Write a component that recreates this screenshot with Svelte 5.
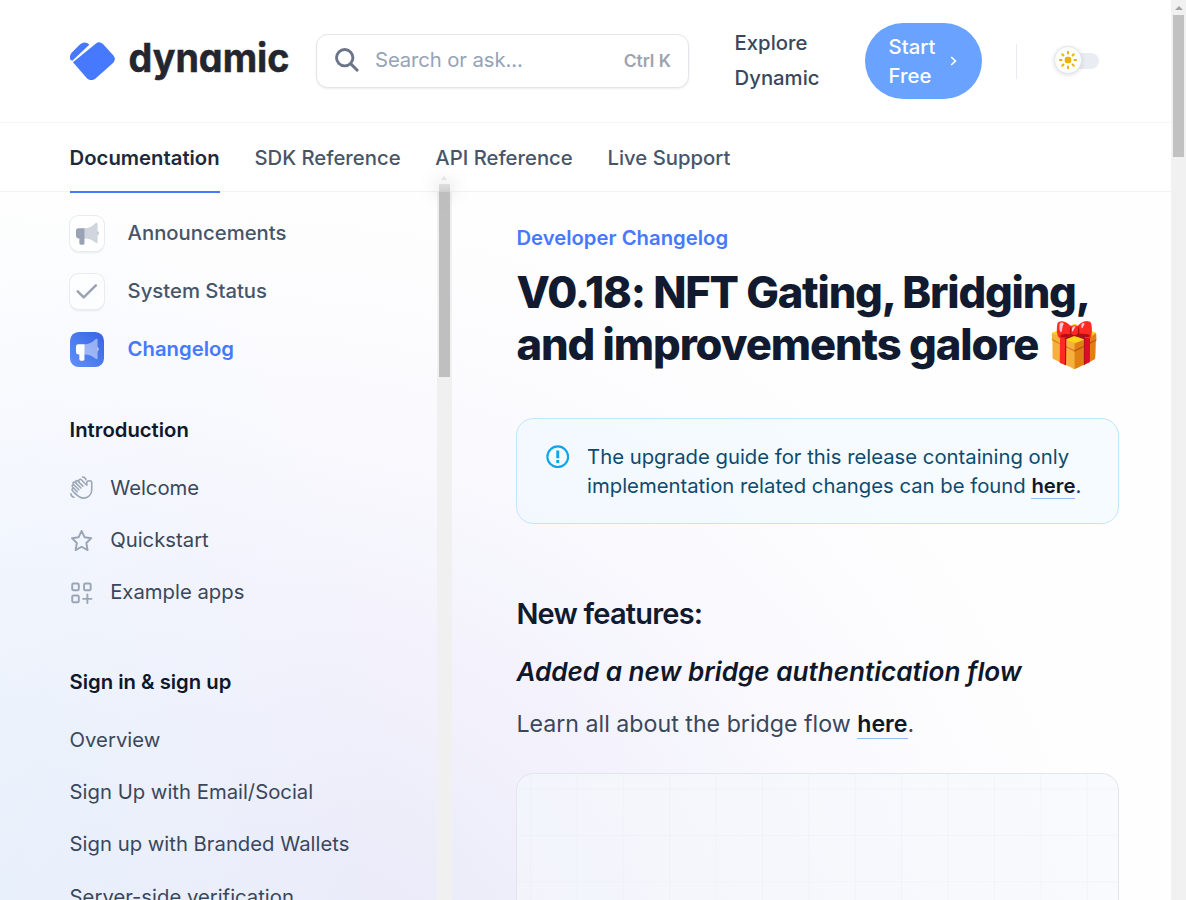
<script>
  const tabs = ['Documentation', 'SDK Reference', 'API Reference', 'Live Support'];
  const anchors = [
    { label: 'Announcements', icon: 'horn' },
    { label: 'System Status', icon: 'check' },
    { label: 'Changelog', icon: 'horn', active: true }
  ];
  const groups = [
    {
      title: 'Introduction',
      items: [
        { label: 'Welcome', icon: 'wave' },
        { label: 'Quickstart', icon: 'star' },
        { label: 'Example apps', icon: 'apps' }
      ]
    },
    {
      title: 'Sign in & sign up',
      items: [
        { label: 'Overview' },
        { label: 'Sign Up with Email/Social' },
        { label: 'Sign up with Branded Wallets' },
        { label: 'Server-side verification' }
      ]
    }
  ];
  const rays = [0, 45, 90, 135, 180, 225, 270, 315];
</script>

<div class="page">
  <div class="view">
    <header>
      <div class="top">
        <a class="brand" href="#home">
          <svg class="mark" viewBox="60 65 136 116">
            <path d="M61 118C59 111 59 104 65 97L88 74C97 65 109 63 118 73L67 121Z" />
            <path d="M69 126L137 70Q148 61 159 71L191 106Q199 117 190 127L136 175Q124 184 112 175Z" />
          </svg>
          <svg class="word" viewBox="0 0 162 52"><text x="-.5" y="37" textLength="161" lengthAdjust="spacingAndGlyphs">dynamic</text></svg>
        </a>
        <div class="search">
          <svg viewBox="0 0 24 24"><circle cx="9.7" cy="9.7" r="8.2" /><path d="M15.6 15.6L23 23" /></svg>
          <span class="hint">Search or ask...</span>
          <span class="key">Ctrl K</span>
        </div>
        <a class="explore" href="#explore">Explore Dynamic</a>
        <a class="cta" href="#start"><span>Start Free</span><svg viewBox="0 0 7 10"><path d="M1.2 1L5.4 5L1.2 9" /></svg></a>
        <i class="rule"></i>
        <div class="toggle">
          <div class="knob">
            <svg viewBox="-10 -10 20 20">
              <rect x="-3.3" y="-3.3" width="6.6" height="6.6" rx="2.4" />
              {#each rays as r}
                <path d="M0 -8.2V-6.4" transform={`rotate(${r})`} />
              {/each}
            </svg>
          </div>
        </div>
      </div>
      <nav>
        {#each tabs as tab, i}
          <a href="#tab" class:current={i === 0}>{tab}</a>
        {/each}
      </nav>
    </header>

    <div class="body">
      <aside>
        <div class="links">
          {#each anchors as a}
            <a class="anchor" class:active={a.active} href="#a">
              <span class="tile">
                {#if a.icon === 'horn'}
                  <svg viewBox="0 0 24 24">
                    <path d="M3.4 6.5H10V17H9.8V22Q9.8 23.5 8.4 23.5H6Q4.5 23.5 4.5 22V17H3.4Q1 17 1 14.5V9Q1 6.5 3.4 6.5ZM23.4 9.3Q24.4 9.5 24.4 11.5Q24.4 13.3 23.4 13.7Z" />
                    <path class="cone" d="M10 6.5C14.5 6.5 17.8 4.5 21 1.2Q23.4 -.2 23.4 2V20.5Q23.4 23 21 21.2C17.8 18.5 14.5 17 10 17Z" />
                  </svg>
                {:else}
                  <svg viewBox="0 0 24 24"><path class="tick" d="M2.8 11.8L9 18L21.6 5.6" /></svg>
                {/if}
              </span>
              <span class="label">{a.label}</span>
            </a>
          {/each}
        </div>
        {#each groups as g}
          <section>
            <h5>{g.title}</h5>
            {#each g.items as item}
              <a class="item" href="#i">
                {#if item.icon === 'wave'}
                  <svg class="fine" viewBox="0 0 24 24">
                    <path d="M5.6 18.2L2.6 15.2C1.2 13.7 2.9 12 4.3 13.2L7.4 16.2M5 13.7L2.7 11.4C1.4 9.9 3 8.3 4.4 9.6L9.2 14.2M5.6 10.7L3.5 8.5C2.3 7 4 5.4 5.4 6.7L11.2 12.3M7.6 8.7L6.2 7C5 5.5 6.7 3.9 8 5.2L13.4 10.5" />
                    <path d="M9.5 6.5L9.2 5.7C8.4 4 10.4 2.6 11.7 3.9L17.4 9.6V6.7C17.6 4.2 22.2 4.2 22.5 6.7V14.6C22.5 19.3 18.8 22.9 14.1 22.9C10.6 22.9 8.4 21 5.6 18.2" />
                    <path d="M13 1C14.8 1.1 16.2 2.2 16.6 4M1 18.4C1 20.2 2.2 21.6 4 21.9" />
                  </svg>
                {:else if item.icon === 'star'}
                  <svg viewBox="0 0 24 24"><path d="M12 2L15 8.5L22 9.5L16.9 14.5L18.2 21.8L12 18.4L5.8 21.8L7.1 14.5L2 9.5L9 8.5Z" /></svg>
                {:else if item.icon === 'apps'}
                  <svg viewBox="0 0 24 24">
                    <rect x="2.3" y="2.5" width="6.8" height="7" rx="1.3" />
                    <rect x="14.6" y="2.5" width="6.8" height="7" rx="1.3" />
                    <rect x="2.3" y="15" width="6.8" height="7" rx="1.3" />
                    <path d="M18 14V22.8M13.6 18.5H22.2" />
                  </svg>
                {/if}
                {item.label}
              </a>
            {/each}
          </section>
        {/each}
      </aside>
      <div class="side-track">
        <div class="side-thumb"></div>
        <div class="peek"><i></i></div>
      </div>
      <main>
        <p class="eyebrow">Developer Changelog</p>
        <h1><span>V0.18: NFT Gating, Bridging,</span><br />and improvements galore 🎁</h1>
        <div class="callout">
          <svg viewBox="0 0 24 24"><circle cx="12" cy="12" r="10.6" /><path d="M10.5 5.5H13.5V13.6H10.5ZM10.5 15.4H13.5V18.4H10.5Z" /></svg>
          <p>The upgrade guide for this release containing only<br />implementation related changes can be found <a href="#g">here</a>.</p>
        </div>
        <h2>New features:</h2>
        <h3>Added a new bridge authentication flow</h3>
        <p class="para">Learn all about the bridge flow <a href="#b">here</a>.</p>
        <div class="frame"></div>
      </main>
    </div>
  </div>
  <div class="bar"><i></i><b></b></div>
</div>

<style>
  :global(body) { overflow: hidden; }
  * { box-sizing: border-box; }
  a { color: inherit; text-decoration: none; }
  p, h1, h2, h3, h5 { margin: 0; }
  .page {
    display: flex; width: 1186px; height: 900px; overflow: hidden;
    font: 400 20.3px/29px Inter, sans-serif; color: #3a475b;
    background:
      radial-gradient(ellipse 400px 700px at 0 880px, rgba(230, 241, 251, .75), rgba(236, 245, 253, .4) 55%, rgba(244, 250, 255, 0) 100%),
      radial-gradient(ellipse 860px 840px at 260px 1040px, #e6e8f9 0%, #ebebf9 24%, #f3f2fc 50%, #fafafe 76%, rgba(254, 254, 254, 0) 100%),
      #fefefe;
  }
  .view { width: 1171px; display: flex; flex-direction: column; }
  header { flex: none; height: 192px; border-bottom: 1px solid #f1f2f5; background: rgba(255, 255, 255, .5); }
  .top { height: 123px; border-bottom: 1px solid #f5f6f8; display: flex; align-items: center; padding: 0 72px 0 70px; }
  .brand { display: flex; width: 246px; height: 52px; flex: none; }
  .mark { width: 45.3px; height: 38.7px; margin: 6.5px 13.5px 0 0; fill: #4779ff; flex: none; }
  .word { width: 162px; height: 52px; flex: none; overflow: visible; }
  .word text { font: 700 39.5px Inter, sans-serif; font-feature-settings: 'cv11'; fill: #24262f; stroke: #24262f; stroke-width: .5; }
  .search {
    flex: none; width: 373px; height: 54px; border: 1px solid #e3e5eb; border-radius: 11.6px; background: #fff;
    display: flex; align-items: center; padding: 0 17px 0 17.5px; box-shadow: 0 1px 2px rgba(15, 23, 42, .08); margin-bottom: 1px;
  }
  .search svg { width: 24px; height: 24px; margin-top: -1px; fill: none; stroke: #6b7488; stroke-width: 2.9; }
  .hint { color: #94a3b8; margin: -2px 0 0 16.5px; letter-spacing: -.1px; }
  .key { margin-left: auto; color: #9ca3af; font-weight: 600; font-size: 17.4px; }
  .explore { width: 84px; margin-left: 45.6px; font-weight: 500; line-height: 35px; flex: none; margin-top: -2px; }
  .cta {
    flex: none; width: 117px; height: 76px; margin-left: 46px; border-radius: 38px; background: #69a3ff; color: #fff; font-weight: 500;
    display: flex; align-items: center; padding-left: 24px;
  }
  .cta span { width: 61.5px; }
  .cta svg { width: 7px; height: 10px; fill: none; stroke: #fff; stroke-width: 1.7; }
  .rule { width: 1px; height: 35px; background: #e9ebf0; margin-left: 34px; }
  .toggle { width: 36px; height: 15.5px; margin-left: 46.5px; border-radius: 8px; background: #e9edf3; display: flex; align-items: center; }
  .knob {
    width: 28px; height: 28px; flex: none; margin: -2px 0 0 -9px; border-radius: 50%; background: #fff; border: 1px solid #e2e6ee;
    box-shadow: 0 1px 4px rgba(15, 23, 42, .14); display: grid; place-items: center;
  }
  .knob svg { width: 20px; height: 20px; fill: #eab308; stroke: #eab308; stroke-width: 2; stroke-linecap: round; overflow: visible; }
  .knob rect { stroke: none; }
  nav { display: flex; gap: 34.8px; height: 70px; padding-left: 69.6px; font-weight: 500; color: #475569; }
  nav a { height: 70px; line-height: 69px; }
  nav .current { color: #1e293b; font-weight: 600; border-bottom: 2px solid #4779ff; }
  .body { display: flex; flex: 1; min-height: 0; }
  aside { width: 437px; padding: 23px 0 0 69.6px; overflow: hidden; }
  .links { margin-bottom: 48px; }
  .anchor { display: flex; align-items: center; gap: 23.2px; height: 36px; margin-bottom: 22px; font-weight: 500; color: #475569; }
  .label { margin-top: -2px; }
  .tile {
    width: 34.8px; height: 35px; border-radius: 8.7px; display: grid; place-items: center; color: #99a3b3; margin-top: 1px;
    background: rgba(255, 255, 255, .6); box-shadow: 0 0 0 1px #e9ebef, 0 1.5px 2px rgba(15, 23, 42, .08);
  }
  .tile svg { width: 23.2px; height: 23.2px; fill: currentColor; overflow: visible; }
  .tile .cone { opacity: .45; }
  .tile .tick { fill: none; stroke: currentColor; stroke-width: 2.6; stroke-linecap: round; stroke-linejoin: round; }
  .anchor.active { color: #4779ff; font-weight: 600; }
  .active .tile { color: #fff; background: linear-gradient(45deg, #6090fa, #3763e3); box-shadow: none; }
  section { margin-bottom: 49px; }
  h5 { font-size: 20.3px; line-height: 29px; font-weight: 600; color: #0f172a; margin-bottom: 17.4px; }
  .item { display: flex; align-items: center; height: 52.2px; gap: 17.4px; white-space: nowrap; }
  .item svg { width: 23.2px; height: 23.2px; margin-top: 1px; fill: none; stroke: #9aa5b5; stroke-width: 2; stroke-linecap: round; stroke-linejoin: round; }
  .item .fine { stroke-width: 1.6; }
  .side-track { position: relative; width: 15px; flex: none; background: #f0f0f0; }
  .side-thumb { width: 11px; height: 185px; margin: 0 auto; background: #bfbfbf; }
  .peek {
    position: absolute; left: 2px; top: -8px; width: 11px; height: 8px; background: linear-gradient(#dedede, #cecece);
    box-shadow: 0 0 14px 6px rgba(190, 190, 190, .22);
  }
  .peek i { position: absolute; left: 2px; top: -8px; border: 3.5px solid transparent; border-top: 0; border-bottom: 4px solid #e4e4e4; }
  main { padding: 31px 0 0 64.4px; width: 667px; flex: none; }
  .eyebrow { color: #4779ff; font-weight: 600; }
  h1 { margin-top: 14px; font-size: 43.5px; line-height: 52.2px; font-weight: 800; letter-spacing: -1.09px; color: #111a2e; white-space: nowrap; }
  h1 span { letter-spacing: -1.19px; }
  .callout {
    display: flex; height: 106px; margin-top: 47.5px; border: 1px solid #bfe7fb; border-radius: 17.4px; background: rgba(240, 249, 255, .6);
    padding: 23px 0 0 28.6px; color: #0c4a6e; white-space: nowrap;
  }
  .callout svg { width: 23.5px; height: 23.5px; margin: 3px 17.6px 0 0; flex: none; fill: #0ea5e9; }
  .callout circle { fill: none; stroke: #0ea5e9; stroke-width: 2.2; }
  main a { color: #0f172a; font-weight: 600; border-bottom: 1px solid #9ab8ff; }
  h2 { margin-top: 70px; font-size: 29px; line-height: 40px; font-weight: 600; letter-spacing: -.8px; color: #111a2e; }
  h3 { margin-top: 19px; font-size: 26.1px; line-height: 37px; font-weight: 600; font-style: italic; color: #0f172a; white-space: nowrap; }
  .para { margin-top: 14px; font-size: 23.2px; line-height: 40.6px; }
  .frame {
    height: 300px; margin-top: 28px; border: 1px solid #e3e4ec; border-radius: 17.4px;
    background:
      linear-gradient(90deg, rgba(226, 232, 240, .3) 1px, transparent 1px) 13px 0 / 46.4px 46.4px,
      linear-gradient(rgba(226, 232, 240, .3) 1px, transparent 1px) 0 14.5px / 46.4px 46.4px,
      rgba(244, 247, 252, .65);
  }
  .bar { width: 15px; background: #f1f1f1; display: flex; flex-direction: column; align-items: center; }
  .bar i { border: 4px solid transparent; border-top: 0; border-bottom: 4px solid #a3a3a3; margin-top: 6px; }
  .bar b { width: 11px; height: 142px; margin-top: 5px; background: #c1c1c1; }
</style>
